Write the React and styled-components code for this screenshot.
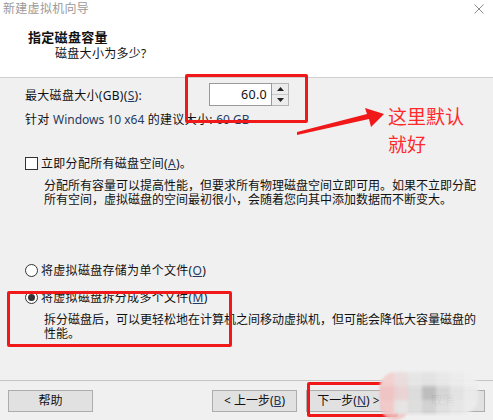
import React from "react"
import styled, { createGlobalStyle } from "styled-components"

const GlobalStyle = createGlobalStyle`
  body {
    margin: 0;
    background: #f0f0f0;
    font-family: "Noto Sans", "Noto Sans CJK SC", sans-serif;
  }
`
const Wizard = styled.div`
  position: relative;
  width: 493px;
  height: 420px;
  display: flex;
  flex-direction: column;
  background: #f0f0f0;
  overflow: hidden;
  font-size: 12px;
  color: #111;
  letter-spacing: 0.3px;
`
const Header = styled.div`
  height: 77px;
  background: #fff;
  border-bottom: 1px solid #cfcfcf;
  display: flex;
  flex-direction: column;
`
const TitleBar = styled.div`
  height: 18px;
  display: flex;
  align-items: center;
  justify-content: space-between;
  padding: 0 9px 0 3px;
`
const WindowTitle = styled.span`
  color: #9a9a9a;
  font-size: 12px;
  line-height: 18px;
`
const StepTitle = styled.div`
  margin: 11px 0 0 28px;
  font-weight: bold;
  font-size: 13px;
  line-height: 16px;
`
const StepSub = styled.div`
  margin: 1px 0 0 55px;
  line-height: 16px;
`
const Body = styled.div`
  flex: 1;
  display: flex;
  flex-direction: column;
  padding-left: 25px;
`
const SizeRow = styled.div`
  margin-top: 5px;
  display: grid;
  grid-template-columns: 184px auto;
  align-items: center;
  height: 23px;
`
const Spinner = styled.div`
  display: flex;
  height: 23px;
`
const SizeInput = styled.div`
  width: 57px;
  height: 21px;
  border: 1px solid #9a9a9a;
  background: #fff;
  text-align: right;
  padding-right: 4px;
  line-height: 21px;
  font-size: 12.5px;
`
const SpinButtons = styled.div`
  width: 16px;
  display: flex;
  flex-direction: column;
  border: 1px solid #b5b5b5;
  border-left: none;
`
const SpinHalf = styled.div`
  flex: 1;
  display: flex;
  align-items: center;
  justify-content: center;
  background: #ececec;
  & + & {
    border-top: 1px solid #c8c8c8;
  }
`
const Hint = styled.div`
  margin-top: 7px;
  line-height: 14px;
`
const Latin = styled.span`
  color: #243a63;
  letter-spacing: 0;
`
const OptionRow = styled.label`
  display: flex;
  align-items: center;
  gap: 3px;
  height: 16px;
  margin-top: ${p => p.$gap}px;
`
const CheckBox = styled.span`
  width: 11px;
  height: 11px;
  border: 1px solid #333;
  background: #fff;
`
const Radio = styled.span`
  width: 11px;
  height: 11px;
  border: 1px solid #333;
  border-radius: 50%;
  background: #fff;
  display: flex;
  align-items: center;
  justify-content: center;
  &::after {
    content: "";
    width: 7px;
    height: 7px;
    border-radius: 50%;
    background: ${p => (p.$checked ? "#333" : "transparent")};
  }
`
const Key = styled.u`
  color: #243a63;
  text-underline-offset: 1px;
`
const Description = styled.div`
  margin: 8px 0 0 19px;
  line-height: 14px;
  letter-spacing: 0;
`
const Footer = styled.div`
  border-top: 1px solid #c4c4c4;
  padding: 9px 8px 8px 8px;
  display: flex;
  justify-content: space-between;
`
const ButtonGroup = styled.div`
  display: flex;
  gap: 9px;
`
const Button = styled.button`
  width: 85px;
  height: 22px;
  background: #e1e1e1;
  border: 1px solid #adadad;
  font-family: inherit;
  font-size: 12px;
  color: #111;
  padding: 0;
  line-height: 20px;
`
const Annotation = styled.div`
  position: absolute;
  left: ${p => p.$x}px;
  top: ${p => p.$y}px;
  width: ${p => p.$w}px;
  height: ${p => p.$h}px;
  border: 3px solid #f01818;
  border-radius: 2px;
  box-sizing: border-box;
`
const Note = styled.div`
  position: absolute;
  left: 388px;
  top: 102px;
  color: #ff2a2a;
  font-family: "Noto Sans CJK SC", sans-serif;
  font-size: 19px;
  line-height: 28px;
  letter-spacing: 0;
`
const ArrowLayer = styled.svg`
  position: absolute;
  left: 0;
  top: 0;
  pointer-events: none;
`
const CloseIcon = styled.svg`
  display: block;
`
const Mosaic = styled.div`
  position: absolute;
  left: 380px;
  top: 372px;
  display: grid;
  grid-template-columns: repeat(7, 14px);
  grid-auto-rows: 14px;
  border-radius: 16px;
  overflow: hidden;
  filter: blur(1.5px);
  opacity: 0.95;
`
const Blob = styled.div`
  position: absolute;
  left: 380px;
  top: 374px;
  width: 30px;
  height: 46px;
  border-radius: 15px;
  background: #f0c2c2;
  opacity: 0.85;
  filter: blur(1px);
`

const tiles = [
  "#f3d2d2", "#eadede", "#e6e6e6", "#e3e3e3", "#e8e8e8", "#ececec", "#efefef",
  "#efc4c4", "#ead4d4", "#dcdcdc", "#bdbdbd", "#d6d6d6", "#e4e4e4", "#ebebeb",
  "#f2caca", "#e6e6e6", "#dedede", "#d2d2d2", "#e0e0e0", "#e7e7e7", "#ececec",
]

export default function App() {
  return (
    <Wizard>
      <GlobalStyle />
      <Header>
        <TitleBar>
          <WindowTitle>新建虚拟机向导</WindowTitle>
          <CloseIcon width="10" height="10" viewBox="0 0 10 10">
            <path d="M0.5 0.5 L9.5 9.5 M9.5 0.5 L0.5 9.5" stroke="#8a8a8a" strokeWidth="1" />
          </CloseIcon>
        </TitleBar>
        <StepTitle>指定磁盘容量</StepTitle>
        <StepSub>磁盘大小为多少?</StepSub>
      </Header>
      <Body>
        <SizeRow>
          <span>
            最大磁盘大小(GB)(<Key>S</Key>):
          </span>
          <Spinner>
            <SizeInput>60.0</SizeInput>
            <SpinButtons>
              <SpinHalf>
                <svg width="7" height="4" viewBox="0 0 7 4"><path d="M0 4 L3.5 0 L7 4 Z" fill="#222" /></svg>
              </SpinHalf>
              <SpinHalf>
                <svg width="7" height="4" viewBox="0 0 7 4"><path d="M0 0 L3.5 4 L7 0 Z" fill="#222" /></svg>
              </SpinHalf>
            </SpinButtons>
          </Spinner>
        </SizeRow>
        <Hint>
          针对 <Latin>Windows 10 x64</Latin> 的建议大小: <Latin>60 GB</Latin>
        </Hint>
        <OptionRow $gap={28}>
          <CheckBox />
          <span>
            立即分配所有磁盘空间(<Key>A</Key>)。
          </span>
        </OptionRow>
        <Description>
          分配所有容量可以提高性能，但要求所有物理磁盘空间立即可用。如果不立即分配
          <br />
          所有空间，虚拟磁盘的空间最初很小，会随着您向其中添加数据而不断变大。
        </Description>
        <OptionRow $gap={55}>
          <Radio />
          <span>
            将虚拟磁盘存储为单个文件(<Key>O</Key>)
          </span>
        </OptionRow>
        <OptionRow $gap={11}>
          <Radio $checked />
          <span>
            将虚拟磁盘拆分成多个文件(<Key>M</Key>)
          </span>
        </OptionRow>
        <Description>
          拆分磁盘后，可以更轻松地在计算机之间移动虚拟机，但可能会降低大容量磁盘的
          <br />
          性能。
        </Description>
      </Body>
      <Footer>
        <Button>帮助</Button>
        <ButtonGroup>
          <Button>
            &lt; 上一步(<Key>B</Key>)
          </Button>
          <Button>
            下一步(<Key>N</Key>) &gt;
          </Button>
          <Button>取消</Button>
        </ButtonGroup>
      </Footer>

      <Annotation $x={185} $y={74} $w={123} $h={49} />
      <Annotation $x={7} $y={291} $w={225} $h={56} />
      <Annotation $x={307} $y={382} $w={91} $h={35} />
      <ArrowLayer width="493" height="420" viewBox="0 0 493 420">
        <polygon
          points="297,135 297,132 367,114 365,108 384,114 371,127 369,119"
          fill="#f01818"
        />
      </ArrowLayer>
      <Note>
        这里默认
        <br />
        就好
      </Note>
      <Blob />
      <Mosaic>
        {tiles.map((c, i) => (
          <div key={i} style={{ background: c }} />
        ))}
      </Mosaic>
    </Wizard>
  )
}
